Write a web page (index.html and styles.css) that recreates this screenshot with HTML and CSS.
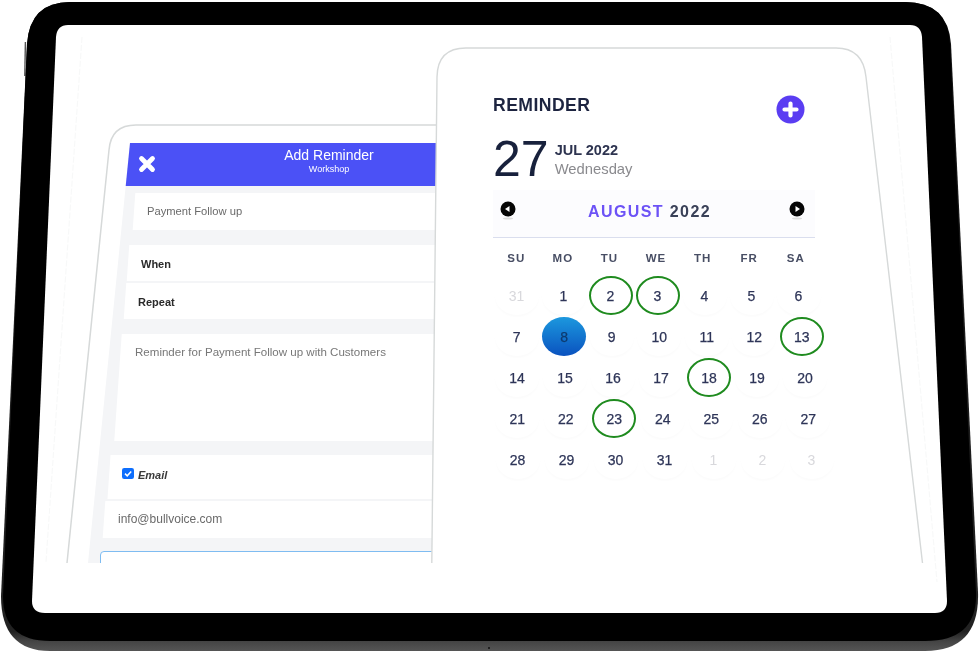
FILE: index.html
```html
<!DOCTYPE html>
<html lang="en">
<head>
<meta charset="utf-8">
<title>Reminder</title>
<link rel="stylesheet" href="styles.css">
</head>
<body>
<main class="stage">
  <svg class="device" width="979" height="653" viewBox="0 0 979 653" aria-hidden="true">
    <defs>
      <linearGradient id="rim" x1="0" y1="0" x2="0" y2="1">
        <stop offset="0" stop-color="#111"/>
        <stop offset=".97" stop-color="#222"/>
        <stop offset=".985" stop-color="#444"/>
        <stop offset="1" stop-color="#555"/>
      </linearGradient>
    </defs>
    <path d="M25.4 42 L24.8 76" stroke="#555" stroke-width="1.4" fill="none"/>
    <path fill="url(#rim)" d="M27 44 Q30 2 70 2 L905 2 Q948 2 951 44 L978 592 Q980 651 925 651 L50 651 Q1 651 1 596 Z"/>
    <path fill="#000" d="M27 44 Q30 2 70 2 L905 2 Q948 2 950 44 L976 592 Q978 641 925 641 L50 641 Q3 641 3 596 Z"/>
    <circle cx="489" cy="648" r="1" fill="#111"/>
    <path fill="#fff" d="M56 37 Q57 25 68 25 L910 25 Q921 25 922 37 L947 601 Q947 613 935 613 L45 613 Q32 613 32 601 Z"/>
    <path d="M82 37 L46 562 M890 37 L937 582" stroke="#f7f8f8" stroke-width="1" stroke-dasharray="6 2" fill="none"/>
    <path d="M67 563 L109 150 Q111 125 136 125 L436 125" stroke="#d6d9d9" stroke-width="1.5" fill="none"/>
  </svg>

  <section class="back">
    <header class="back-head">
      <svg class="close" width="18" height="18" viewBox="0 0 18 18" aria-hidden="true"><path d="M3.5 3.5 L14.5 14.5 M14.5 3.5 L3.5 14.5" stroke="#fff" stroke-width="4.8" stroke-linecap="round"/></svg>
      <div class="back-title">
        <h2>Add Reminder</h2>
        <p>Workshop</p>
      </div>
    </header>
    <div class="back-body">
      <div class="field f-title"><span class="value">Payment Follow up</span></div>
      <div class="field f-when"><span class="label">When</span></div>
      <div class="field f-repeat"><span class="label">Repeat</span></div>
      <div class="field f-notes"><span class="value value-long">Reminder for Payment Follow up with Customers</span></div>
      <div class="field f-email">
        <svg class="check" width="12" height="11" viewBox="0 0 12 11" aria-hidden="true"><rect width="12" height="11" rx="2.2" fill="#0d6efd"/><path d="M3 5.6 L5.2 7.8 L9.2 3.4" stroke="#fff" stroke-width="1.5" fill="none"/></svg>
        <span class="label label-italic">Email</span>
      </div>
      <div class="field f-address"><span class="value value-mail">info@bullvoice.com</span></div>
      <div class="field f-focus"></div>
    </div>
  </section>

  <section class="front">
    <svg class="front-shape" width="494" height="516" viewBox="0 0 494 516" aria-hidden="true">
      <path d="M0.8 516 L6 30 Q6.5 1 35 1 L405 1 Q432 1 435 30 L491.5 516" fill="#fff" stroke="#d6d9d9" stroke-width="1.4"/>
    </svg>
    <div class="front-content">
      <header class="front-head">
        <h1>REMINDER</h1>
        <svg width="29" height="29" viewBox="0 0 29 29" aria-hidden="true"><circle cx="14.5" cy="14.5" r="14" fill="#5a3df2"/><path d="M14.5 8.5 V20.5 M8.5 14.5 H20.5" stroke="#fff" stroke-width="4.2" stroke-linecap="round"/></svg>
      </header>
      <div class="today">
        <span class="today-num">27</span>
        <div class="today-text">
          <strong>JUL 2022</strong>
          <span>Wednesday</span>
        </div>
      </div>
      <nav class="month">
        <svg width="16" height="20" viewBox="0 0 16 20" aria-hidden="true"><ellipse cx="8" cy="17.5" rx="5" ry="1" fill="#ddd"/><circle cx="8" cy="8" r="7.5" fill="#050505"/><path d="M5 8 L9.5 5 V11 Z" fill="#fff"/></svg>
        <div class="month-name"><span class="month-accent">AUGUST</span> 2022</div>
        <svg width="16" height="20" viewBox="0 0 16 20" aria-hidden="true"><ellipse cx="8" cy="17.5" rx="5" ry="1" fill="#ddd"/><circle cx="8" cy="8" r="7.5" fill="#050505"/><path d="M11 8 L6.5 5 V11 Z" fill="#fff"/></svg>
      </nav>
      <div class="weekdays">
        <span>SU</span><span>MO</span><span>TU</span><span>WE</span><span>TH</span><span>FR</span><span>SA</span>
      </div>
      <div class="week w1">
        <span class="day muted"><i>31</i></span><span class="day"><i>1</i></span><span class="day ring"><i>2</i></span><span class="day ring"><i>3</i></span><span class="day"><i>4</i></span><span class="day"><i>5</i></span><span class="day"><i>6</i></span>
      </div>
      <div class="week w2">
        <span class="day"><i>7</i></span><span class="day selected"><i>8</i></span><span class="day"><i>9</i></span><span class="day"><i>10</i></span><span class="day"><i>11</i></span><span class="day"><i>12</i></span><span class="day ring"><i>13</i></span>
      </div>
      <div class="week w3">
        <span class="day"><i>14</i></span><span class="day"><i>15</i></span><span class="day"><i>16</i></span><span class="day"><i>17</i></span><span class="day ring"><i>18</i></span><span class="day"><i>19</i></span><span class="day"><i>20</i></span>
      </div>
      <div class="week w4">
        <span class="day"><i>21</i></span><span class="day"><i>22</i></span><span class="day ring"><i>23</i></span><span class="day"><i>24</i></span><span class="day"><i>25</i></span><span class="day"><i>26</i></span><span class="day"><i>27</i></span>
      </div>
      <div class="week w5">
        <span class="day"><i>28</i></span><span class="day"><i>29</i></span><span class="day"><i>30</i></span><span class="day"><i>31</i></span><span class="day muted"><i>1</i></span><span class="day muted"><i>2</i></span><span class="day muted"><i>3</i></span>
      </div>
    </div>
  </section>
</main>
</body>
</html>
```

FILE: styles.css
```css
* { box-sizing: border-box; }

html, body {
  margin: 0;
  padding: 0;
  background: #fff;
  overflow: hidden;
}

body {
  font-family: "Liberation Sans", Arial, sans-serif;
}

.stage {
  position: relative;
  width: 979px;
  height: 653px;
  overflow: hidden;
}

.device {
  position: absolute;
  left: 0;
  top: 0;
}

/* Back panel: Add Reminder form */
.back {
  position: absolute;
  left: 88px;
  top: 143px;
  width: 350px;
  height: 420px;
  overflow: hidden;
  background: #f4f5f7;
  clip-path: polygon(42px 0, 350px 0, 350px 420px, 0 420px);
  display: flex;
  flex-direction: column;
}

.back-head {
  flex: none;
  height: 43px;
  background: #4b51f6;
  color: #fff;
  display: flex;
  align-items: flex-start;
  padding-left: 50px;
}

.close {
  flex: none;
  margin-top: 12px;
  filter: blur(.45px);
}

.back-title {
  flex: none;
  width: 350px;
  margin-left: -2px;
  text-align: center;
  filter: blur(.45px);
}

.back-title h2 {
  margin: 4px 0 0;
  font-size: 14px;
  line-height: 16px;
  font-weight: 400;
}

.back-title p {
  margin: 1px 0 0;
  font-size: 9px;
  line-height: 11px;
}

.back-body {
  flex: 1;
  display: flex;
  flex-direction: column;
  padding-top: 7px;
}

.field {
  position: relative;
  flex: none;
  display: flex;
  align-items: center;
  filter: blur(.45px);
}

.field::before {
  content: "";
  position: absolute;
  left: 0;
  top: 0;
  bottom: 0;
  right: -20px;
  background: #fff;
  transform: skewX(-4deg);
}

.field > * {
  position: relative;
}

.value {
  font-size: 11.2px;
  line-height: 14px;
  color: #6a6a6a;
}

.value-long {
  font-size: 11.55px;
  color: #777;
}

.value-mail {
  font-size: 12px;
}

.label {
  font-size: 11px;
  line-height: 14px;
  font-weight: 700;
  color: #2a2a2a;
}

.label-italic {
  font-style: italic;
  margin-left: 4px;
  color: #3a3a3a;
}

.check {
  margin-top: -3px;
}

.f-title { height: 37px; margin-left: 46px; margin-bottom: 15px; padding: 0 0 2px 13px; }
.f-when { height: 36px; margin-left: 40px; margin-bottom: 2px; padding: 2px 0 0 13px; }
.f-repeat { height: 36px; margin-left: 37px; margin-bottom: 15px; padding: 2px 0 0 13px; }
.f-notes { height: 107px; margin-left: 30px; margin-bottom: 14px; padding: 11px 0 0 17px; align-items: flex-start; }
.f-email { height: 44px; margin-left: 21px; margin-bottom: 2px; padding: 0 0 4px 13px; }
.f-address { height: 37px; margin-left: 16px; margin-bottom: 13px; padding: 0 0 2px 14px; }
.f-focus { height: 60px; margin-left: 12px; margin-right: -6px; border: 1.5px solid #7fbcf1; border-radius: 4px; background: #fff; }
.f-focus::before { display: none; }

/* Front panel: calendar */
.front {
  position: absolute;
  left: 431px;
  top: 47px;
  width: 494px;
  height: 516px;
}

.front-shape {
  position: absolute;
  left: 0;
  top: 0;
}

.front-content {
  position: relative;
  padding: 48px 0 0 62px;
}

.front-head {
  width: 312px;
  display: flex;
  justify-content: space-between;
  align-items: flex-start;
}

.front-head h1 {
  margin: 0;
  font-size: 17.6px;
  line-height: 20px;
  font-weight: 700;
  letter-spacing: .45px;
  color: #1d2440;
  filter: blur(.4px);
}

.today {
  display: flex;
  align-items: center;
  gap: 6px;
  margin-top: 12px;
  height: 46px;
  filter: blur(.4px);
}

.today-num {
  font-size: 50px;
  line-height: 46px;
  color: #18213c;
}

.today-text {
  display: flex;
  flex-direction: column;
  padding-top: 1px;
}

.today-text strong {
  font-size: 14.5px;
  line-height: 19px;
  color: #2e3450;
}

.today-text span {
  font-size: 14.8px;
  line-height: 19px;
  color: #8a8a8e;
}

.month {
  width: 322px;
  height: 48px;
  margin-top: 8px;
  padding: 11px 10px 0 7px;
  background: #fcfcfe;
  border-bottom: 1.5px solid #dadeee;
  display: flex;
  justify-content: space-between;
  align-items: flex-start;
}

.month-name {
  margin: 2px 0 0 0;
  padding-right: 6px;
  font-size: 16px;
  line-height: 18px;
  font-weight: 700;
  letter-spacing: 1.4px;
  color: #3a4158;
  filter: blur(.4px);
}

.month-accent {
  color: #6c52f6;
}

.weekdays {
  width: 326px;
  height: 20px;
  margin-top: 10px;
  display: flex;
  filter: blur(.4px);
}

.weekdays span {
  flex: 1;
  text-align: center;
  font-size: 11.5px;
  line-height: 20px;
  font-weight: 700;
  letter-spacing: 1px;
  color: #484e64;
}

.weekdays + .week {
  margin-top: 7px;
}

.week {
  height: 41px;
  display: flex;
}

.w1 { width: 329px; }
.w2 { width: 332.5px; }
.w3 { width: 336px; }
.w4 { width: 339.5px; }
.w5 { width: 343px; }

.day {
  flex: 1;
  display: flex;
  align-items: center;
  justify-content: center;
}

.day i {
  width: 44px;
  height: 39px;
  flex: none;
  display: flex;
  align-items: center;
  justify-content: center;
  border-radius: 50%;
  font-style: normal;
  font-size: 14px;
  font-weight: 400;
  -webkit-text-stroke: .25px #2e3558;
  color: #2e3558;
  box-shadow: 0 2px 2px rgba(40, 40, 80, .015);
  filter: blur(.4px);
}

.muted i {
  color: #d8d8dc;
  -webkit-text-stroke: 0;
}

.ring i {
  border: 2.2px solid #1f8b1f;
  box-shadow: none;
}

.selected i {
  background: linear-gradient(180deg, #1c98de 0%, #0a52bf 100%);
  box-shadow: none;
  color: #0d3a6e;
  -webkit-text-stroke: .25px #0d3a6e;
}
```
